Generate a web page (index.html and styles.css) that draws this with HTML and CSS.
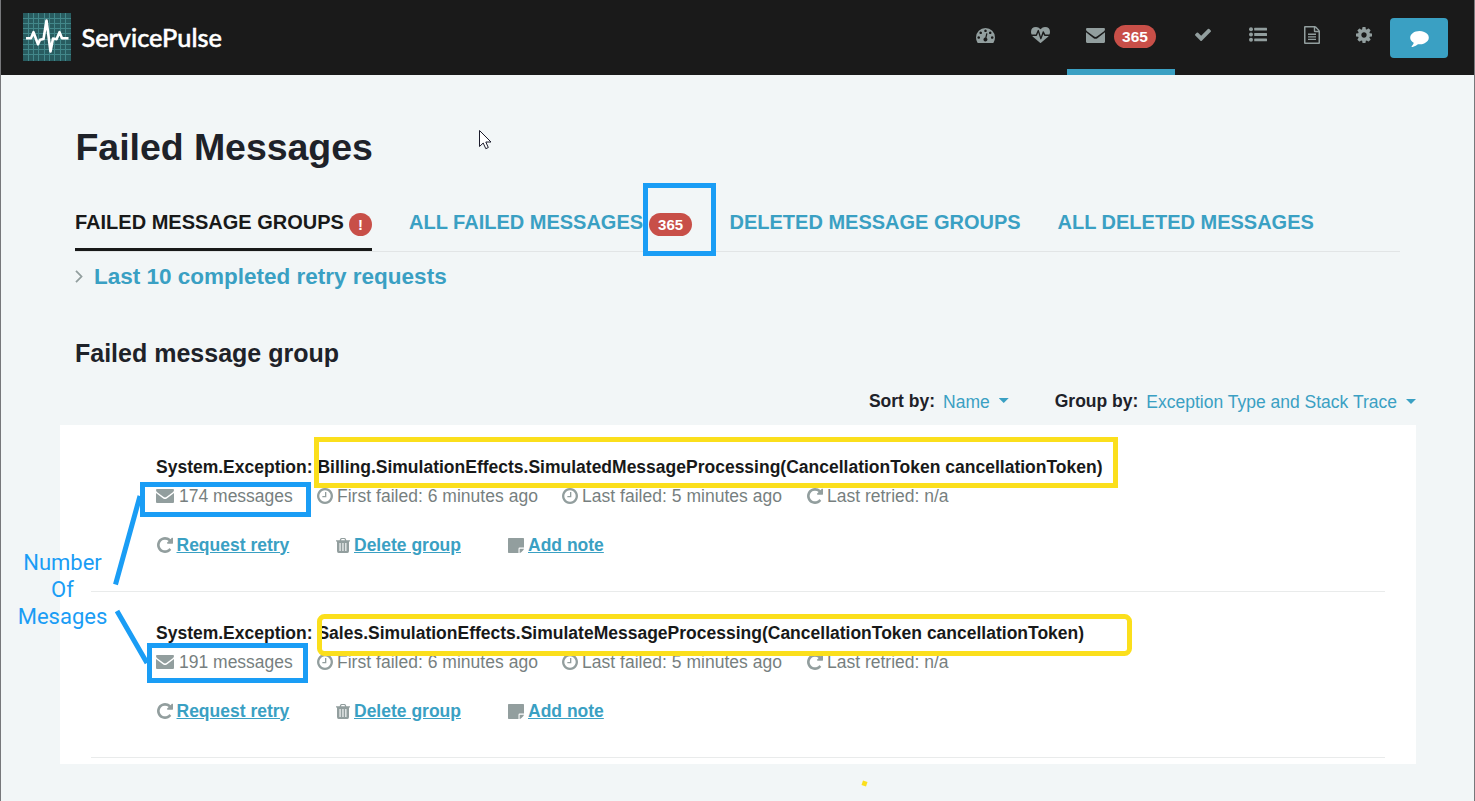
FILE: index.html
```html
<!DOCTYPE html>
<html lang="en">
<head>
<meta charset="utf-8">
<title>ServicePulse</title>
<link rel="stylesheet" href="styles.css">
</head>
<body>
<svg class="defs" aria-hidden="true">
  <symbol id="envelope" viewBox="0 0 18 14"><path d="M1 0h16Q18 0 18 1 18 2.200 16.800 3.200L10.300 8Q9 8.900 7.700 8L1.200 3.200Q0 2.200 0 1 0 0 1 0zM0 4l7.200 5.500q1.800 1.200 3.600 0L18 4v9q0 1-1 1H1Q0 14 0 13z"/></symbol>
  <symbol id="repeat" viewBox="128 128 1536 1536"><path d="M1664 256v448q0 26-19 45t-45 19h-448q-42 0-59-40-17-39 14-69l138-138q-148-137-349-137-104 0-198.500 40.500t-163.500 109.500-109.500 163.500-40.500 198.500 40.500 198.500 109.500 163.500 163.500 109.500 198.500 40.500q119 0 225-52t179-147q7-10 23-12 15 0 25 9l137 138q9 8 9.500 20.500t-7.500 22.500q-109 132-264 204.500t-327 72.500q-156 0-298-61t-245-164-164-245-61-298 61-298 164-245 245-164 298-61q147 0 284.500 55.500t244.500 156.500l130-129q29-31 70-14 39 17 39 59z"/></symbol>
  <symbol id="clock" viewBox="128 128 1536 1536"><path d="M1024 544v448q0 14-9 23t-23 9h-320q-14 0-23-9t-9-23v-64q0-14 9-23t23-9h224v-352q0-14 9-23t23-9h64q14 0 23 9t9 23zm416 352q0-148-73-273t-198-198-273-73-273 73-198 198-73 273 73 273 198 198 273 73 273-73 198-198 73-273zm224 0q0 209-103 385.500t-279.500 279.500-385.500 103-385.500-103-279.500-279.500-103-385.500 103-385.500 279.500-279.500 385.500-103 385.500 103 279.500 279.500 103 385.500z"/></symbol>
  <symbol id="trash" viewBox="0 0 14 15"><path fill-rule="evenodd" d="M0 2.200h3.600L4.400.6Q4.700 0 5.400 0h3.200q.7 0 1 .6l.8 1.600H14v1.200h-1V13q0 2-1.600 2H2.600Q1 15 1 13V3.400H0zm5 0h4L8.500 1.100h-3zM3.500 5v8h1.100V5zm2.900 0v8h1.100V5zm2.900 0v8h1.100V5z"/></symbol>
  <symbol id="note" viewBox="0 0 16 15"><path d="M.7 0h14.600q.7 0 .7.700V9.500h-4.300q-1.200 0-1.200 1.200V15H.7q-.7 0-.7-.7V.7Q0 0 .7 0zM11.600 10.700H16q-.2.900-.8 1.500l-2 2q-.7.700-1.600.8z"/></symbol>
  <symbol id="gauge" viewBox="0 0 19 15"><path fill-rule="evenodd" d="M9.500 0A9.500 9.500 0 0 1 19 9.500q0 2.700-1.400 5-.3.500-.8.500H2.200q-.5 0-.8-.5Q0 12.200 0 9.500A9.500 9.500 0 0 1 9.500 0zM2.700 8.200a1.300 1.300 0 1 0 .01 0zM4.700 3.500a1.300 1.300 0 1 0 .01 0zM9.500 1.500a1.300 1.300 0 1 0 .01 0zM14.200 3.500a1.300 1.300 0 1 0 .01 0zM16.200 8.200a1.300 1.300 0 1 0 .01 0zM10.200 5.300l-.9 4.200a2 2 0 1 0 1.200.3l1-4.200z"/></symbol>
  <symbol id="heartbeat" viewBox="0 0 19 16"><path d="M9.500 2.200Q11.500 0 14 0q5 0 5 5 0 1.200-.6 2.600h-4.100l-1.500-3q-.5-.7-1.100 0l-1.800 5.200L7.900 3.300q-.5-.9-1.200 0L4.900 7.600H.6Q0 6.200 0 5q0-5 5-5 2.500 0 4.500 2.200zM1.300 8.900h4q.5 0 .8-.7l1.100-2.600L9.300 12q.5.900 1.100 0L12.300 7l.8 1.500q.2.400.8.400h3.800q-.5.700-1.200 1.400l-6.500 5.500q-.5.400-1 0L2.500 10.300Q1.800 9.600 1.300 8.900z"/></symbol>
  <symbol id="check" viewBox="121 270 1550 1252"><path d="M1671 566q0 40-28 68l-724 724-136 136q-28 28-68 28t-68-28l-136-136-362-362q-28-28-28-68t28-68l136-136q28-28 68-28t68 28l294 295 656-657q28-28 68-28t68 28l136 136q28 28 28 68z"/></symbol>
  <symbol id="list" viewBox="0 0 18 15"><circle cx="2" cy="2.200" r="2"/><circle cx="2" cy="7.500" r="2"/><circle cx="2" cy="12.800" r="2"/><rect x="5.200" y=".8" width="12.800" height="2.800" rx=".5"/><rect x="5.200" y="6.100" width="12.800" height="2.800" rx=".5"/><rect x="5.200" y="11.400" width="12.800" height="2.800" rx=".5"/></symbol>
  <symbol id="file" viewBox="0 0 16 18"><path fill-rule="evenodd" d="M1 0h9.800q.7 0 1.300.6l3.300 3.300q.6.600.6 1.400V17q0 1-1 1H1q-1 0-1-1V1q0-1 1-1zM1.500 1.500v15h13V6.200h-3.700q-1 0-1-1V1.500zM11.200 1.700v3.100h3.100zM4 7.600h8v1.300H4zM4 10.200h8v1.300H4zM4 12.800h8v1.300H4z"/></symbol>
  <symbol id="cog" viewBox="128 128 1536 1536"><path d="M1152 896q0-106-75-181t-181-75-181 75-75 181 75 181 181 75 181-75 75-181zm512-109v222q0 12-8 23t-20 13l-185 28q-19 54-39 91 35 50 107 138 10 12 10 25t-9 23q-27 37-99 108t-94 71q-12 0-26-9l-138-108q-44 23-91 38-16 136-29 186-7 28-36 28h-222q-14 0-24.500-8.500t-11.500-21.500l-28-184q-49-16-90-37l-141 107q-10 9-25 9-14 0-25-11-126-114-165-168-7-10-7-23 0-12 8-23 15-21 51-66.500t54-70.500q-27-50-41-99l-183-27q-13-2-21-12.500t-8-23.500v-222q0-12 8-23t19-13l186-28q14-46 39-92-40-57-107-138-10-12-10-24 0-10 9-23 26-36 98.500-107.500t94.500-71.500q13 0 26 10l138 107q44-23 91-38 16-136 29-186 7-28 36-28h222q14 0 24.500 8.500t11.500 21.500l28 184q49 16 90 37l142-107q9-9 24-9 13 0 25 10 129 119 165 170 7 8 7 22 0 12-8 23-15 21-51 66.500t-54 70.500q26 50 41 98l183 28q13 2 21 12.500t8 23.500z"/></symbol>
  <symbol id="comment" viewBox="0 256 1792 1540"><path d="M1792 896q0 174-120 321.500t-326 233-450 85.500q-70 0-145-8-198 175-460 242-49 14-114 22-17 2-30.500-9t-17.500-29v-1q-3-4-.5-12t2-10 4.500-9.500l6-9 7-8.500 8-9q7-8 31-34.500t34.500-38 31-39.500 32.500-51 27-59 26-76q-157-89-247.500-220t-90.500-281q0-130 71-248.500t191-204.500 286-136.500 348-50.500q244 0 450 85.500t326 233 120 321.500z"/></symbol>
</svg>

<header class="navbar">
  <div class="brand">
    <svg class="logo" viewBox="0 0 48 48">
      <rect width="48" height="48" fill="#285c60"/>
      <path class="grid" d="M0 5.500h48M0 10.500h48M0 15.500h48M0 20.500h48M0 26.500h48M0 31.500h48M0 36.500h48M0 41.500h48M5.500 0v48M10.500 0v48M15.500 0v48M21.500 0v48M26.500 0v48M31.500 0v48M37.500 0v48M42.500 0v48"/>
      <path class="pulse" d="M3 25.200h5l2.500-6 4.500 12 2-4.500 3.500-.7L23.500 7.500l4 31 2.500-13 3.500.7 3-7 2.500 6h6.500"/>
    </svg>
    <span class="brand-name">ServicePulse</span>
  </div>
  <nav class="nav">
    <a class="nav-item first"><svg class="icon gauge"><use href="#gauge"/></svg></a>
    <a class="nav-item second"><svg class="icon heart"><use href="#heartbeat"/></svg></a>
    <a class="nav-item active"><svg class="icon mail"><use href="#envelope"/></svg><span class="badge">365</span></a>
    <a class="nav-item"><svg class="icon check"><use href="#check"/></svg></a>
    <a class="nav-item"><svg class="icon list"><use href="#list"/></svg></a>
    <a class="nav-item doc"><svg class="icon file"><use href="#file"/></svg></a>
    <a class="nav-item last"><svg class="icon cog"><use href="#cog"/></svg></a>
    <button class="feedback"><svg class="comment"><use href="#comment"/></svg></button>
  </nav>
</header>

<main class="page">
  <h1>Failed Messages</h1>
  <div class="tabs">
    <a class="tab groups active">Failed Message Groups<span class="badge round">!</span></a>
    <a class="tab all">All Failed Messages<span class="badge">365</span></a>
    <a class="tab deleted">Deleted Message Groups</a>
    <a class="tab">All Deleted Messages</a>
  </div>
  <div class="history">
    <svg class="chevron" viewBox="0 0 8 13"><path d="M1 .8l5.500 5.700L1 12.200"/></svg>
    <a>Last 10 completed retry requests</a>
  </div>
  <h2>Failed message group</h2>
  <div class="filters">
    <div class="filter sort"><b>Sort by:</b><a>Name</a><i class="caret"></i></div>
    <div class="filter"><b>Group by:</b><a>Exception Type and Stack Trace</a><i class="caret low"></i></div>
  </div>
  <section class="list-panel">
    <article class="group">
      <h3>System.Exception: Billing.SimulationEffects.SimulatedMessageProcessing(CancellationToken cancellationToken)</h3>
      <div class="meta">
        <span class="m-count"><svg class="i-mail"><use href="#envelope"/></svg>174 messages</span>
        <span class="m-first"><svg class="i-sq"><use href="#clock"/></svg>First failed: 6 minutes ago</span>
        <span class="m-last"><svg class="i-sq"><use href="#clock"/></svg>Last failed: 5 minutes ago</span>
        <span><svg class="i-sq"><use href="#repeat"/></svg>Last retried: n/a</span>
      </div>
      <div class="actions">
        <span class="a-retry"><svg class="i-sq"><use href="#repeat"/></svg><a>Request retry</a></span>
        <span class="a-delete"><svg class="i-trash"><use href="#trash"/></svg><a>Delete group</a></span>
        <span><svg class="i-note"><use href="#note"/></svg><a>Add note</a></span>
      </div>
    </article>
    <article class="group">
      <h3>System.Exception: Sales.SimulationEffects.SimulateMessageProcessing(CancellationToken cancellationToken)</h3>
      <div class="meta">
        <span class="m-count"><svg class="i-mail"><use href="#envelope"/></svg>191 messages</span>
        <span class="m-first"><svg class="i-sq"><use href="#clock"/></svg>First failed: 6 minutes ago</span>
        <span class="m-last"><svg class="i-sq"><use href="#clock"/></svg>Last failed: 5 minutes ago</span>
        <span><svg class="i-sq"><use href="#repeat"/></svg>Last retried: n/a</span>
      </div>
      <div class="actions">
        <span class="a-retry"><svg class="i-sq"><use href="#repeat"/></svg><a>Request retry</a></span>
        <span class="a-delete"><svg class="i-trash"><use href="#trash"/></svg><a>Delete group</a></span>
        <span><svg class="i-note"><use href="#note"/></svg><a>Add note</a></span>
      </div>
    </article>
  </section>
</main>

<!-- Annotation layer -->
<svg class="marks" viewBox="0 0 1475 801">
  <g fill="none" stroke="#1a9df5" stroke-width="5">
    <rect x="645.500" y="185.500" width="68" height="68"/>
    <rect x="142.500" y="484.500" width="166" height="30"/>
    <rect x="149.500" y="645.500" width="156" height="35"/>
    <path d="M140 496L115.500 584.500M117 611l30 52"/>
  </g>
  <g fill="none" stroke="#fbdf1c" stroke-width="5">
    <rect x="316.500" y="439.500" width="799" height="46"/>
    <rect x="319.500" y="616.500" width="810" height="37" rx="5"/>
  </g>
  <path fill="#fbdf1c" d="M863 780.500l4.500 1.500-1.500 4.500-4.500-1.500z"/>
  <path fill="#fff" stroke="#1b1b2b" d="M479.500 130.500v16l3.700-3.500 2.600 5.700 2.500-1.200-2.500-5.500h5.200z"/>
</svg>
<div class="callout">Number<br>Of<br>Mesages</div>
</body>
</html>
```

FILE: styles.css
```css
* { box-sizing: border-box; }
body {
  margin: 0;
  height: 801px;
  overflow: hidden;
  background: #f2f6f7;
  border-left: 1px solid #77787b;
  border-right: 1px solid #77787b;
  font-family: "Liberation Sans", Arial, sans-serif;
  font-size: 17.5px;
  color: #181919;
  position: relative;
}
.defs { position: absolute; width: 0; height: 0; }
svg { display: block; flex: none; fill: #929e9e; }

.navbar {
  height: 75px;
  background: #1a1a1a;
  display: flex;
  justify-content: space-between;
}
.brand { display: flex; padding: 13px 0 0 22px; gap: 10.5px; }
.logo { width: 48px; height: 48px; }
.grid { fill: none; stroke: #42878a; stroke-width: 1; }
.pulse { fill: none; stroke: #fff; stroke-width: 2.600; stroke-linejoin: round; }
.brand-name {
  font: 500 25.3px/48px Lato, sans-serif;
  color: #fff;
  -webkit-text-stroke: .5px #fff;
}
.nav { display: flex; padding-right: 26px; }
.nav-item {
  width: 55px;
  height: 75px;
  display: flex;
  justify-content: center;
  padding-top: 24px;
}
.nav-item.first { padding-left: 2px; }
.nav-item.second { padding-left: 2px; }
.nav-item.doc { padding-right: 2px; }
.nav-item.last { width: 50px; padding-right: 2px; }
.nav-item.active { width: 108px; border-bottom: 6px solid #3aa0c3; gap: 9px; }
.gauge { width: 19px; height: 15px; margin-top: 4px; }
.heart { width: 19px; height: 16px; margin-top: 3px; }
.mail { width: 19px; height: 15px; margin-top: 4px; }
.check { width: 16px; height: 13px; margin-top: 4px; }
.list { width: 18px; height: 15px; margin-top: 3px; }
.file { width: 16px; height: 18px; margin-top: 1.5px; }
.cog { width: 16px; height: 16px; margin-top: 3px; }
.feedback {
  width: 58px;
  height: 40px;
  margin-top: 18px;
  border: 0;
  border-radius: 4px;
  background: #3aa0c3;
  display: flex;
  justify-content: center;
  align-items: center;
}
.comment { width: 19px; height: 16px; fill: #fff; margin-top: 1px; }
.badge {
  height: 23px;
  border-radius: 12px;
  background: #c84f48;
  color: #fff;
  text-align: center;
  font: bold 15px/23px "Liberation Sans", Arial, sans-serif;
}
.nav .badge { margin-top: 1px; width: 42px; font-size: 15.500px; }

.page { padding: 49px 58px 0 59px; }
h1 { margin: 0 0 0 15.5px; font-size: 37.500px; line-height: 46px; letter-spacing: -.05px; color: #1e2229; }
.tabs {
  margin: 31px 16px 0 15px;
  height: 51px;
  display: flex;
  border-bottom: 1px solid #e2e5e6;
}
.tab {
  display: flex;
  font-weight: bold;
  font-size: 20px;
  line-height: 43px;
  white-space: nowrap;
  text-transform: uppercase;
  color: #3aa0c3;
}
.tab .badge { margin: 12px 0 0 6px; width: 43px; }
.tab .round { width: 23px; margin-left: 5px; }
.tab.active { color: #181919; border-bottom: 3px solid #181919; width: 297px; }
.groups { margin-right: 37px; }
.all { width: 320.500px; }
.deleted { width: 328px; }
.history {
  display: flex;
  align-items: center;
  gap: 11px;
  margin: 9px 0 0 15px;
  height: 30px;
  font-size: 22.500px;
  font-weight: bold;
  color: #3aa0c3;
}
.history a { padding-top: 2px; }
.chevron { width: 8px; height: 13px; fill: none; stroke: #929e9e; stroke-width: 1.800; }
h2 { margin: 47px 0 0 15px; font-size: 25px; line-height: 30px; color: #1e2229; }
.filters {
  display: flex;
  justify-content: flex-end;
  height: 26px;
  margin-top: 20px;
  line-height: 26px;
}
.filter { display: flex; }
.filter a { color: #3aa0c3; margin: 1px 0 0 8px; }
.filter b { color: #1e2229; }
.sort { margin-right: 46px; }
.caret {
  margin: 10px 0 0 9px;
  width: 10px;
  height: 5px;
  background: #3aa0c3;
  clip-path: polygon(0 0, 100% 0, 50% 100%);
}
.low { margin-top: 11px; }
.list-panel { margin-top: 11px; height: 339px; background: #fff; padding: 1px 31px 0; }
.group { height: 166px; padding: 28px 0 0 65px; border-bottom: 1px solid #e9ebeb; }
h3 { margin: 0; font-size: 17.500px; line-height: 26px; white-space: nowrap; color: #181919; }
.meta { display: flex; height: 26px; margin-top: 3px; line-height: 26px; color: #777f7f; }
.meta span, .actions span { display: flex; align-items: center; gap: 4px; white-space: nowrap; }
.i-mail { width: 18px; height: 14px; }
.i-sq { width: 16px; height: 16px; }
.i-trash { width: 14px; height: 15px; }
.i-note { width: 16px; height: 15px; }
.meta .m-count { width: 161px; gap: 5px; }
.m-first { width: 245px; letter-spacing: .02px; }
.m-last { width: 245px; letter-spacing: .02px; }
.actions { display: flex; margin-top: 23px; height: 26px; font-weight: bold; padding-left: .5px; }
.actions a { color: #3aa0c3; text-decoration: underline; }
.a-retry { width: 179.5px; }
.a-delete { width: 172px; }

.marks { position: absolute; left: -1px; top: 0; width: 1475px; height: 801px; fill: none; }
.callout {
  position: absolute;
  left: 10.5px;
  top: 549px;
  width: 102px;
  text-align: center;
  font: 22px/27px Roboto, sans-serif;
  color: #1a9df5;
}
```
